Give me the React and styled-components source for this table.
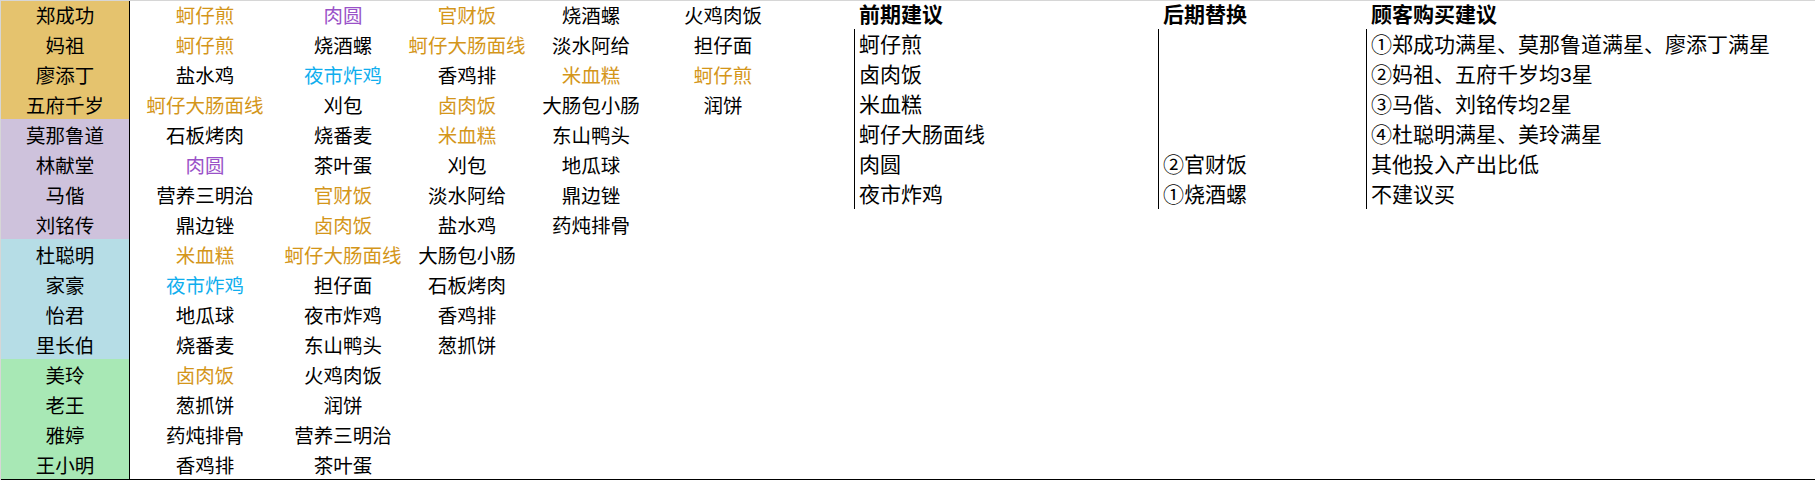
import React from "react";
import styled, { createGlobalStyle } from "styled-components";

const Global = createGlobalStyle`
  html, body { margin: 0; padding: 0; background: #fff; }
  body { font-family: "Liberation Sans", "Noto Sans CJK SC", sans-serif; color: #000; }
`;

const Sheet = styled.div`
  width: 1814px;
  border-top: 1px solid #d6d6d6;
  border-left: 1px solid #d6d6d6;
  display: flex;
  flex-direction: column;
`;

const Row = styled.div`
  display: flex;
  height: ${(p) => (p.$first ? 28 : 30)}px;
  border-bottom: ${(p) => (p.$last ? "1px solid #000" : "none")};
`;

const NameCell = styled.div`
  width: 129px;
  flex: none;
  border-right: 1px solid #000;
  background: ${(p) => p.$bg};
  display: flex;
  align-items: flex-end;
  justify-content: center;
  padding-bottom: 3px;
  box-sizing: border-box;
  font-size: 19.5px;
  line-height: 20px;
`;

const FoodCell = styled.div`
  width: ${(p) => p.$w}px;
  flex: none;
  display: flex;
  align-items: flex-end;
  justify-content: center;
  padding-bottom: 3px;
  box-sizing: border-box;
  font-size: 19.5px;
  line-height: 20px;
  color: ${(p) => p.$color};
  white-space: nowrap;
`;

const Notes = styled.div`
  display: flex;
  margin-left: ${(p) => p.$offset}px;
  flex: 1;
`;

const NoteCell = styled.div`
  width: ${(p) => (p.$w ? `${p.$w}px` : "auto")};
  flex: ${(p) => (p.$w ? "none" : "1")};
  box-sizing: border-box;
  border-left: 1px solid ${(p) => (p.$ruled ? "#000" : "transparent")};
  padding-left: 4px;
  padding-bottom: 3px;
  display: flex;
  align-items: flex-end;
  font-size: 21px;
  line-height: 22px;
  font-weight: ${(p) => (p.$bold ? 700 : 400)};
  white-space: nowrap;
`;

const C = {
  k: "#000000",
  o: "#D4961A",
  p: "#9A52C8",
  c: "#10AEEE",
};

const BG = {
  gold: "#E5C36E",
  purple: "#CEC2DC",
  blue: "#B6DDE6",
  green: "#A8E8B5",
};

const widths = [150, 126, 122, 126, 138];

const rows = [
  ["郑成功", "gold", [["蚵仔煎", "o"], ["肉圆", "p"], ["官财饭", "o"], ["烧酒螺", "k"], ["火鸡肉饭", "k"]]],
  ["妈祖", "gold", [["蚵仔煎", "o"], ["烧酒螺", "k"], ["蚵仔大肠面线", "o"], ["淡水阿给", "k"], ["担仔面", "k"]]],
  ["廖添丁", "gold", [["盐水鸡", "k"], ["夜市炸鸡", "c"], ["香鸡排", "k"], ["米血糕", "o"], ["蚵仔煎", "o"]]],
  ["五府千岁", "gold", [["蚵仔大肠面线", "o"], ["刈包", "k"], ["卤肉饭", "o"], ["大肠包小肠", "k"], ["润饼", "k"]]],
  ["莫那鲁道", "purple", [["石板烤肉", "k"], ["烧番麦", "k"], ["米血糕", "o"], ["东山鸭头", "k"]]],
  ["林献堂", "purple", [["肉圆", "p"], ["茶叶蛋", "k"], ["刈包", "k"], ["地瓜球", "k"]]],
  ["马偕", "purple", [["营养三明治", "k"], ["官财饭", "o"], ["淡水阿给", "k"], ["鼎边锉", "k"]]],
  ["刘铭传", "purple", [["鼎边锉", "k"], ["卤肉饭", "o"], ["盐水鸡", "k"], ["药炖排骨", "k"]]],
  ["杜聪明", "blue", [["米血糕", "o"], ["蚵仔大肠面线", "o"], ["大肠包小肠", "k"]]],
  ["家豪", "blue", [["夜市炸鸡", "c"], ["担仔面", "k"], ["石板烤肉", "k"]]],
  ["怡君", "blue", [["地瓜球", "k"], ["夜市炸鸡", "k"], ["香鸡排", "k"]]],
  ["里长伯", "blue", [["烧番麦", "k"], ["东山鸭头", "k"], ["葱抓饼", "k"]]],
  ["美玲", "green", [["卤肉饭", "o"], ["火鸡肉饭", "k"]]],
  ["老王", "green", [["葱抓饼", "k"], ["润饼", "k"]]],
  ["雅婷", "green", [["药炖排骨", "k"], ["营养三明治", "k"]]],
  ["王小明", "green", [["香鸡排", "k"], ["茶叶蛋", "k"]]],
];

const notes = [
  ["前期建议", "后期替换", "顾客购买建议"],
  ["蚵仔煎", "", "①郑成功满星、莫那鲁道满星、廖添丁满星"],
  ["卤肉饭", "", "②妈祖、五府千岁均3星"],
  ["米血糕", "", "③马偕、刘铭传均2星"],
  ["蚵仔大肠面线", "", "④杜聪明满星、美玲满星"],
  ["肉圆", "②官财饭", "其他投入产出比低"],
  ["夜市炸鸡", "①烧酒螺", "不建议买"],
];

const foodsTotal = widths.reduce((a, b) => a + b, 0);

export default function App() {
  return (
    <>
      <Global />
      <Sheet>
        {rows.map(([name, bg, foods], i) => {
          const note = notes[i];
          return (
            <Row key={i} $first={i === 0} $last={i === rows.length - 1}>
              <NameCell $bg={BG[bg]}>{name}</NameCell>
              {widths.map((w, j) => {
                const f = foods[j];
                return (
                  <FoodCell key={j} $w={w} $color={f ? C[f[1]] : C.k}>
                    {f ? f[0] : ""}
                  </FoodCell>
                );
              })}
              {note && (
                <Notes $offset={855 - 131 - foodsTotal}>
                  <NoteCell $w={304} $ruled={i > 0} $bold={i === 0}>{note[0]}</NoteCell>
                  <NoteCell $w={208} $ruled={i > 0} $bold={i === 0}>{note[1]}</NoteCell>
                  <NoteCell $ruled={i > 0} $bold={i === 0}>{note[2]}</NoteCell>
                </Notes>
              )}
            </Row>
          );
        })}
      </Sheet>
    </>
  );
}
